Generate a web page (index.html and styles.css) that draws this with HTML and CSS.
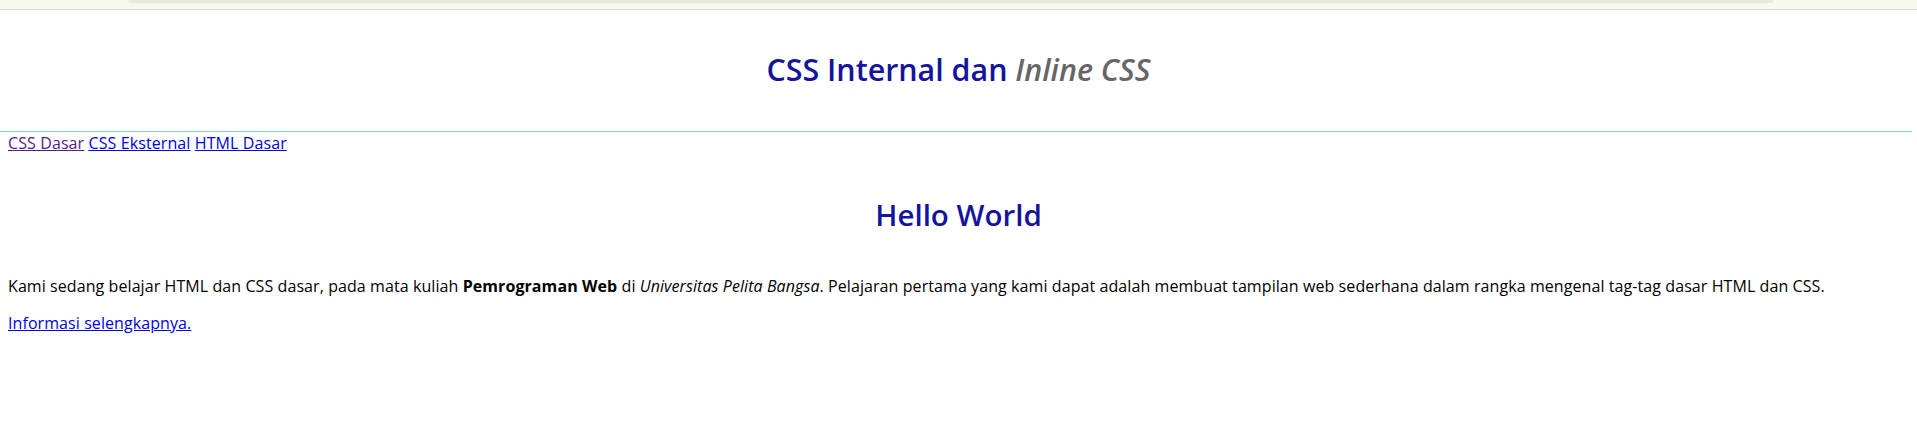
FILE: index.html
```html
<!DOCTYPE html>
<html>
<head>
<meta charset="utf-8">
<link rel="stylesheet" href="styles.css">
<title>CSS Internal dan Inline CSS</title>
</head>
<body>
<div class="topbar"><div class="tab"></div></div>
<header class="header">
  <h1 class="title">CSS Internal dan <em>Inline CSS</em></h1>
</header>
<hr class="rule">
<nav class="nav"><a class="visited" href="#">CSS Dasar</a> <a href="#">CSS Eksternal</a> <a href="#">HTML Dasar</a></nav>
<main class="content">
  <h2 class="hello">Hello World</h2>
  <p class="text">Kami sedang belajar HTML dan CSS dasar, pada mata kuliah <b>Pemrograman Web</b> di <i>Universitas Pelita Bangsa</i>. Pelajaran pertama yang kami dapat adalah membuat tampilan web sederhana dalam rangka mengenal tag-tag dasar HTML dan CSS.</p>
  <p class="text more"><a href="#">Informasi selengkapnya.</a></p>
</main>
</body>
</html>
```
FILE: styles.css
```css
html, body {
  margin: 0;
  padding: 0;
  background: #ffffff;
}
body {
  font-family: "Open Sans", sans-serif;
  color: #000;
}
.topbar {
  height: 9px;
  background: #f6f9f0;
  border-bottom: 1px solid #d8dccc;
  padding: 0 144px 0 128px;
}
.tab {
  height: 3px;
  background: #e2ebdd;
  border-radius: 0 0 4px 4px;
}
.header {
  height: 121px;
  box-sizing: border-box;
  padding: 40px 8px 0;
}
.title {
  margin: 0;
  text-align: center;
  font-size: 30.4px;
  font-weight: 600;
  color: #14149c;
  line-height: 40px;
}
.title em {
  color: #666666;
}
.rule {
  margin: 0 5px 0 0;
  border: 0;
  height: 1px;
  background: #7ecdf0;
}
.nav {
  padding: 0 8px;
  font-size: 16px;
  line-height: 22px;
  letter-spacing: 0.1px;
}
.nav a { color: #0000ee; }
.nav a.visited { color: #551a8b; }
.content {
  padding: 0 8px;
}
.hello {
  margin: 42px 0 0;
  text-align: center;
  font-size: 29.5px;
  font-weight: 600;
  color: #14149c;
  line-height: 38px;
}
.text {
  margin: 40px 0 0;
  font-size: 16px;
  letter-spacing: 0.08px;
  line-height: 24px;
}
.text.more { margin-top: 13px; }
.text a { color: #0000ee; }
```
